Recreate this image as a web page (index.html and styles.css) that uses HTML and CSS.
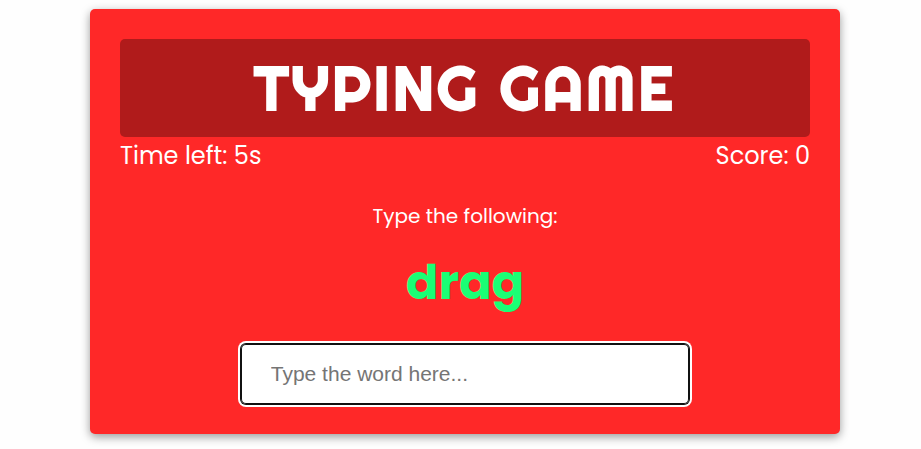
FILE: index.html
```html
<!DOCTYPE html>
<html lang="en">
<head>
<meta charset="utf-8">
<meta name="viewport" content="width=device-width, initial-scale=1">
<title>Typing Game</title>
<link rel="stylesheet" href="styles.css">
</head>
<body>
<main class="game">
  <h1 class="title">TYPING GAME</h1>
  <div class="stats">
    <span>Time left: 5s</span>
    <span>Score: 0</span>
  </div>
  <label class="prompt" for="word">Type the following:</label>
  <p class="word">drag</p>
  <input class="entry" id="word" type="text" placeholder="Type the word here..." autocomplete="off">
</main>
</body>
</html>
```

FILE: styles.css
```css
* {
  box-sizing: border-box;
}

body {
  min-height: 100vh;
  margin: 0;
  padding: 9px 0 0 9px;
  background: #fefefe;
  font-family: Poppins, Inter, sans-serif;
}

.game {
  display: flex;
  flex-direction: column;
  align-items: center;
  max-width: 750px;
  margin: 0 auto;
  padding: 30px;
  border-radius: 5px;
  background: #ff2828;
  color: #fff;
  box-shadow: 0 3px 10px rgba(0, 0, 0, 0.4);
}

.title {
  width: 100%;
  margin: 0;
  padding: 10px;
  border-radius: 5px;
  background: #b01b1b;
  font-family: Righteous, Inter, sans-serif;
  font-size: 60px;
  font-weight: 800;
  letter-spacing: 3px;
  line-height: 78px;
  text-align: center;
}

.stats {
  display: flex;
  justify-content: space-between;
  width: 100%;
  font-size: 24px;
  line-height: 38px;
}

.prompt {
  margin-top: 26px;
  font-size: 20px;
  line-height: 30px;
}

.word {
  margin: 16px 0 25px;
  color: #1aff75;
  font-size: 48px;
  font-weight: 700;
  line-height: 72px;
}

.entry {
  width: 65%;
  height: 60px;
  padding: 0 30px;
  border: 0;
  border-radius: 5px;
  background: #fff;
  box-shadow: inset 0 0 0 1px #111, 0 0 0 1px #111, 0 0 0 3px #fff;
  color: #222;
  font-family: "Liberation Sans", Arial, sans-serif;
  font-size: 21px;
  outline: none;
}

.entry::placeholder {
  color: #757575;
}
```
